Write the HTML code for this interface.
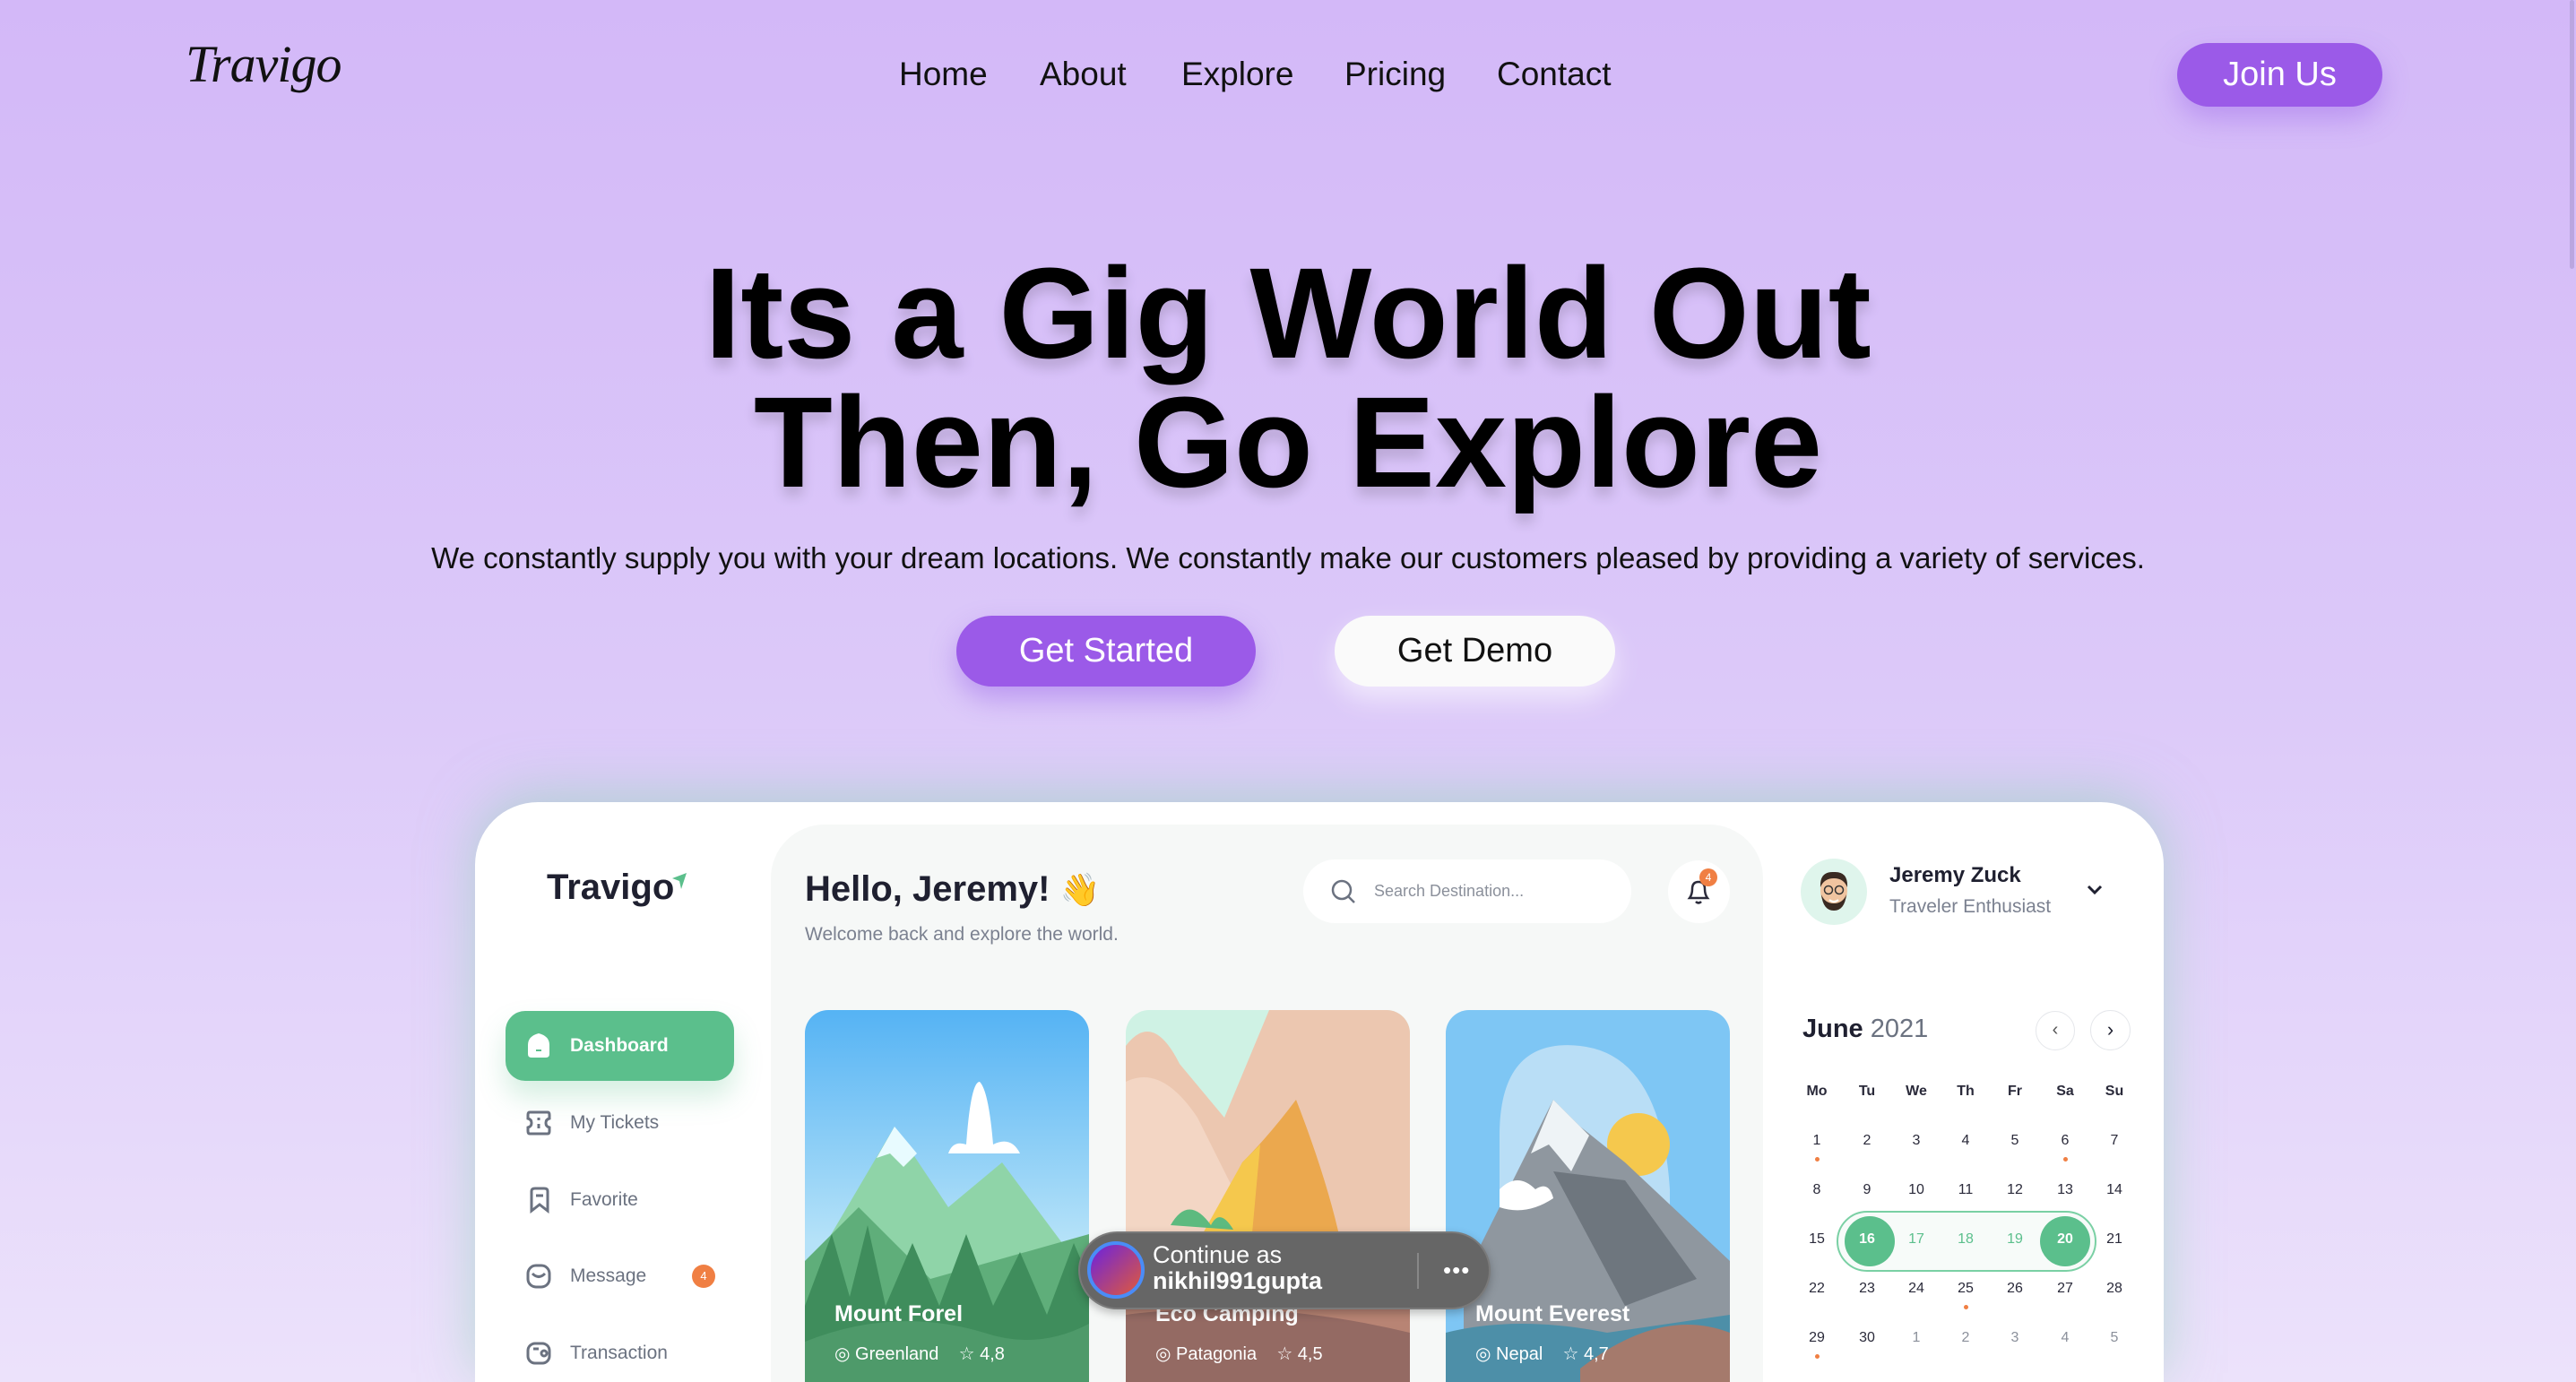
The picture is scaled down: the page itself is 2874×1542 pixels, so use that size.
<!DOCTYPE html>
<html><head><meta charset="utf-8"><style>
*{margin:0;padding:0;box-sizing:border-box}
html,body{width:2874px;height:1542px;overflow:hidden}
body{position:relative;font-family:"Liberation Sans",sans-serif;background:linear-gradient(180deg,#d3b8f8 0%,#dcc9f9 50%,#ece2fb 100%)}
.a{position:absolute}
.nav{font-size:37px;color:#111;top:62px;white-space:nowrap}
.btn{position:absolute;border-radius:40px;display:flex;align-items:center;justify-content:center;font-size:38px}
.menu{position:absolute;left:636px;font-size:21px;color:#6b7280;transform:translateY(-50%)}
.wd,.dn{position:absolute;width:40px;margin-left:-20px;text-align:center;font-size:16px;color:#2a2a3a}
.wd{font-weight:bold;top:1209px}
.dot{position:absolute;width:5px;height:5px;border-radius:50%;background:#f07f43;margin-left:-2.5px}
.card{position:absolute;top:1127px;width:317px;height:415px;border-radius:26px 26px 0 0;overflow:hidden}
.ct{position:absolute;top:1452px;color:#fff;font-weight:bold;font-size:25px}
.cl{position:absolute;top:1498px;color:#fff;font-size:20px;white-space:nowrap}
</style></head><body>
<div class="a" style="left:207px;top:38px;font-family:'Liberation Serif',serif;font-style:italic;font-size:58px;color:#111;letter-spacing:-1px">Travigo</div>
<div class="a nav" style="left:1003px">Home</div>
<div class="a nav" style="left:1160px">About</div>
<div class="a nav" style="left:1318px">Explore</div>
<div class="a nav" style="left:1500px">Pricing</div>
<div class="a nav" style="left:1670px">Contact</div>
<div class="btn" style="left:2429px;top:48px;width:229px;height:71px;background:#9b5ae8;color:#fff;box-shadow:0 14px 30px rgba(140,80,230,.35)">Join Us</div>
<div class="a" style="left:0;width:2874px;top:278px;text-align:center;font-weight:bold;font-size:144px;line-height:144px;color:#000;text-shadow:0 10px 14px rgba(0,0,0,.15)">Its a Gig World Out<br>Then, Go Explore</div>
<div class="a" style="left:0;width:2874px;top:604px;text-align:center;font-size:33px;color:#111">We constantly supply you with your dream locations. We constantly make our customers pleased by providing a variety of services.</div>
<div class="btn" style="left:1067px;top:687px;width:334px;height:79px;background:#9b5ae8;color:#fff;box-shadow:0 14px 30px rgba(140,80,230,.4)">Get Started</div>
<div class="btn" style="left:1489px;top:687px;width:313px;height:79px;background:#fafafa;color:#111;box-shadow:0 14px 30px rgba(255,255,255,.6)">Get Demo</div>
<div class="a" style="right:2px;top:0;width:5px;height:300px;background:#bba6e0;border-radius:3px"></div>

<div class="a" style="left:530px;top:895px;width:1884px;height:647px;background:#fff;border-radius:70px 70px 0 0;box-shadow:0 -10px 60px rgba(140,210,180,.55)"></div>
<div class="a" style="left:860px;top:920px;width:1107px;height:622px;background:#f6f8f7;border-radius:60px 60px 0 0"></div>
<div class="a" style="left:610px;top:968px;font-size:40px;font-weight:bold;color:#1f2030">Travigo</div>
<svg class="a" style="left:748px;top:972px" width="20" height="22"><path d="M2 8 L18 2 L12 20 L10 11 Z" fill="#5bbf8c"/></svg>
<div class="a" style="left:564px;top:1128px;width:255px;height:78px;background:#5bbf8c;border-radius:22px;box-shadow:0 18px 30px rgba(91,191,140,.25)"></div>
<svg class="a" style="left:587px;top:1152px" width="28" height="30"><path d="M2 14 Q2 4 14 1 Q26 4 26 14 V24 Q26 28 22 28 H6 Q2 28 2 24 Z" fill="#fff"/><rect x="11" y="19" width="6" height="2" fill="#5bbf8c"/></svg>
<div class="a" style="left:636px;top:1155px;font-size:21px;font-weight:bold;color:#fff">Dashboard</div>
<svg class="a" style="left:587px;top:1239px" width="28" height="28" fill="none" stroke="#6b7280" stroke-width="3"><path d="M4 2 H24 Q26 2 26 5 V9 Q22 10 22 14 Q22 18 26 19 V23 Q26 26 24 26 H4 Q2 26 2 23 V19 Q6 18 6 14 Q6 10 2 9 V5 Q2 2 4 2Z M14 8V11 M14 15V20"/></svg>
<div class="menu" style="top:1253px">My Tickets</div>
<svg class="a" style="left:590px;top:1324px" width="24" height="30" fill="none" stroke="#6b7280" stroke-width="3"><path d="M3 5 Q3 2 7 2 H17 Q21 2 21 5 V27 L12 20 L3 27Z M8 10H16"/></svg>
<div class="menu" style="top:1339px">Favorite</div>
<svg class="a" style="left:587px;top:1410px" width="28" height="28" fill="none" stroke="#6b7280" stroke-width="3"><rect x="2" y="2" width="24" height="24" rx="9"/><path d="M7 11 Q14 18 21 11"/></svg>
<div class="menu" style="top:1424px">Message</div>
<div class="a" style="left:772px;top:1411px;width:26px;height:26px;border-radius:50%;background:#f07f43;color:#fff;font-size:13px;text-align:center;line-height:26px">4</div>
<svg class="a" style="left:587px;top:1496px" width="28" height="28" fill="none" stroke="#6b7280" stroke-width="3"><rect x="2" y="3" width="24" height="22" rx="8"/><path d="M8 9H14"/><circle cx="20" cy="14" r="3"/></svg>
<div class="menu" style="top:1510px">Transaction</div>

<div class="a" style="left:898px;top:970px;font-size:40px;font-weight:bold;color:#1f2030">Hello, Jeremy! <span style="font-size:36px">👋</span></div>
<div class="a" style="left:898px;top:1031px;font-size:21px;color:#7b8190">Welcome back and explore the world.</div>
<div class="a" style="left:1454px;top:959px;width:366px;height:71px;background:#fff;border-radius:36px"></div>
<svg class="a" style="left:1484px;top:980px" width="30" height="30" fill="none" stroke="#6b7280" stroke-width="2.5"><circle cx="13" cy="13" r="10"/><path d="M20 20L27 27"/></svg>
<div class="a" style="left:1533px;top:984px;font-size:18px;color:#8b909b">Search Destination...</div>
<div class="a" style="left:1861px;top:960px;width:69px;height:70px;background:#fff;border-radius:50%"></div>
<svg class="a" style="left:1880px;top:978px" width="30" height="34" fill="none" stroke="#2a2a3a" stroke-width="2.5"><path d="M5 24 Q8 20 8 14 Q8 6 15 6 Q22 6 22 14 Q22 20 25 24Z M12 28 Q15 31 18 28"/></svg>
<div class="a" style="left:1896px;top:969px;width:20px;height:20px;border-radius:50%;background:#f07f43;color:#fff;font-size:12px;text-align:center;line-height:20px">4</div>

<div class="card" style="left:898px"><svg width="317" height="430"><defs><linearGradient id="s1" x1="0" y1="0" x2="0" y2="1"><stop offset="0" stop-color="#55b3f4"/><stop offset=".6" stop-color="#b5e2f8"/></linearGradient></defs><rect width="317" height="430" fill="url(#s1)"/><path d="M180 150 Q185 80 195 80 Q205 90 210 150 Q230 140 240 160 H160 Q165 145 180 150Z" fill="#fff"/><path d="M0 300 L100 130 L160 220 L220 170 L317 300 V430 H0Z" fill="#8fd4a8"/><path d="M100 130 L80 165 L95 160 L110 175 L125 160Z" fill="#e8fbff"/><path d="M0 280 L60 220 L140 300 L317 250 V430 H0Z" fill="#5fae7a"/><path d="M0 330 L30 250 L50 320 L70 240 L90 330 L120 260 L150 330 L180 250 L210 330 L240 270 L270 340 L300 260 L317 300 V430 H0Z" fill="#3f8d5c"/><path d="M0 370 Q100 330 200 360 Q260 380 317 350 V430 H0Z" fill="#4e9a6a"/></svg></div>
<div class="card" style="left:1256px"><svg width="317" height="430"><rect width="317" height="430" fill="#cff2e4"/><path d="M0 40 Q30 0 60 60 L110 120 L160 0 H317 V430 H0Z" fill="#ecc7b0"/><path d="M0 80 Q40 60 80 120 L120 200 L100 430 H0Z" fill="#f3d6c4"/><path d="M130 170 Q105 220 80 260 L240 260 Q225 190 190 100 Q160 140 130 170Z" fill="#eba84e"/><path d="M130 170 L80 260 L140 260 L150 150Z" fill="#f5c84d"/><path d="M0 280 Q80 230 170 260 Q250 250 317 270 V430 H0Z" fill="#b88474"/><path d="M0 340 Q150 320 317 360 V430 H0Z" fill="#946a63"/><path d="M50 240 Q70 205 95 240 Q105 220 120 245Z" fill="#5dba7f"/></svg></div>
<div class="card" style="left:1613px"><svg width="317" height="430"><rect width="317" height="430" fill="#7ec6f4"/><path d="M60 430 V140 Q60 30 150 40 Q240 50 250 200 V430Z" fill="#b9def6"/><circle cx="215" cy="150" r="35" fill="#f5c84d"/><path d="M20 300 L120 100 L150 130 L200 170 L317 280 V430 H20Z" fill="#8f979f"/><path d="M120 100 L95 160 L115 150 L140 180 L160 140Z" fill="#eef3f6"/><path d="M120 180 L200 190 L280 300 L200 330 Z" fill="#6e767e"/><path d="M60 200 Q80 180 100 200 Q115 190 120 210 Q90 230 60 220Z" fill="#fff"/><path d="M0 360 Q80 340 180 360 L317 340 V430 H0Z" fill="#4d8fa8"/><path d="M150 400 Q240 330 317 360 V430 H150Z" fill="#a57a6c"/></svg></div>
<div class="ct" style="left:931px">Mount Forel</div>
<div class="ct" style="left:1289px">Eco Camping</div>
<div class="ct" style="left:1646px">Mount Everest</div>
<div class="cl" style="left:931px">◎ Greenland &nbsp;&nbsp; ☆ 4,8</div>
<div class="cl" style="left:1289px">◎ Patagonia &nbsp;&nbsp; ☆ 4,5</div>
<div class="cl" style="left:1646px">◎ Nepal &nbsp;&nbsp; ☆ 4,7</div>

<div class="a" style="left:1203px;top:1374px;width:460px;height:87px;border-radius:44px;background:#666;border:2px solid #7a7a7a;box-shadow:0 4px 10px rgba(0,0,0,.25)"></div>
<div class="a" style="left:1213px;top:1385px;width:64px;height:64px;border-radius:50%;border:4px solid #4a8cf7;background:linear-gradient(135deg,#6a22e0,#e05a3a)"></div>
<div class="a" style="left:1286px;top:1386px;color:#fff;font-size:27px;line-height:29px">Continue as<br><b>nikhil991gupta</b></div>
<div class="a" style="left:1581px;top:1398px;width:2px;height:40px;background:#888"></div>
<div class="a" style="left:1610px;top:1402px;color:#fff;font-size:26px;letter-spacing:1px">•••</div>

<div class="a" style="left:2009px;top:958px;width:74px;height:74px;border-radius:50%;background:#dff5ec"></div>
<svg class="a" style="left:2024px;top:968px" width="44" height="54"><ellipse cx="22" cy="26" rx="15" ry="19" fill="#f0c4a0"/><path d="M7 22 Q6 4 22 5 Q38 4 37 22 Q33 12 22 12 Q11 12 7 22Z" fill="#3a2a22"/><path d="M8 30 Q10 48 22 48 Q34 48 36 30 Q32 40 22 40 Q12 40 8 30Z" fill="#3a2a22"/><circle cx="16" cy="25" r="4.5" fill="none" stroke="#333" stroke-width="1.5"/><circle cx="28" cy="25" r="4.5" fill="none" stroke="#333" stroke-width="1.5"/><path d="M17 36 Q22 40 27 36" stroke="#fff" stroke-width="2" fill="none"/></svg>
<div class="a" style="left:2108px;top:963px;font-size:24px;font-weight:bold;color:#1f2030">Jeremy Zuck</div>
<div class="a" style="left:2108px;top:1000px;font-size:21px;color:#7b8190">Traveler Enthusiast</div>
<svg class="a" style="left:2328px;top:986px" width="18" height="14" fill="none" stroke="#1f2030" stroke-width="3"><path d="M2 3 L9 10 L16 3"/></svg>
<div class="a" style="left:2011px;top:1132px;font-size:29px;color:#1f2030"><b>June</b> <span style="color:#6b7280">2021</span></div>
<div class="a" style="left:2271px;top:1128px;width:44px;height:44px;border-radius:50%;border:1.5px solid #e5e7eb;text-align:center;line-height:40px;font-size:20px;color:#555">‹</div>
<div class="a" style="left:2332px;top:1127px;width:45px;height:45px;border-radius:50%;border:1.5px solid #e5e7eb;text-align:center;line-height:41px;font-size:22px;color:#1f2030">›</div>
<div class="wd" style="left:2027px">Mo</div><div class="wd" style="left:2083px">Tu</div><div class="wd" style="left:2138px">We</div><div class="wd" style="left:2193px">Th</div><div class="wd" style="left:2248px">Fr</div><div class="wd" style="left:2304px">Sa</div><div class="wd" style="left:2359px">Su</div>
<div class="a" style="left:2049px;top:1351px;width:290px;height:68px;border-radius:34px;border:2px solid #7ad0a4;background:#f7fbf9"></div>
<div class="a" style="left:2058px;top:1357px;width:56px;height:56px;border-radius:50%;background:#5bbf8c"></div>
<div class="a" style="left:2276px;top:1357px;width:56px;height:56px;border-radius:50%;background:#5bbf8c"></div>
<div id="cal"></div>
<script>
var xs=[2027,2083,2138,2193,2248,2304,2359],ys=[1264,1319,1374,1429,1484];
var d=[[1,2,3,4,5,6,7],[8,9,10,11,12,13,14],[15,16,17,18,19,20,21],[22,23,24,25,26,27,28],[29,30,1,2,3,4,5]];
var h='';for(var r=0;r<5;r++)for(var c=0;c<7;c++){var col='#2a2a3a',fw='normal';
if(r==2&&c>=1&&c<=5){col=(c==1||c==5)?'#fff':'#5bbf8c';if(c==1||c==5)fw='bold'}
if(r==4&&c>=2)col='#8b909b';
h+='<div class="dn" style="left:'+xs[c]+'px;top:'+ys[r]+'px;color:'+col+';font-weight:'+fw+'">'+d[r][c]+'</div>';}
[[0,0],[0,5],[3,3],[4,0]].forEach(function(p){h+='<div class="dot" style="left:'+xs[p[1]]+'px;top:'+(ys[p[0]]+27)+'px"></div>'});
document.getElementById('cal').innerHTML=h;
</script>
</body></html>
